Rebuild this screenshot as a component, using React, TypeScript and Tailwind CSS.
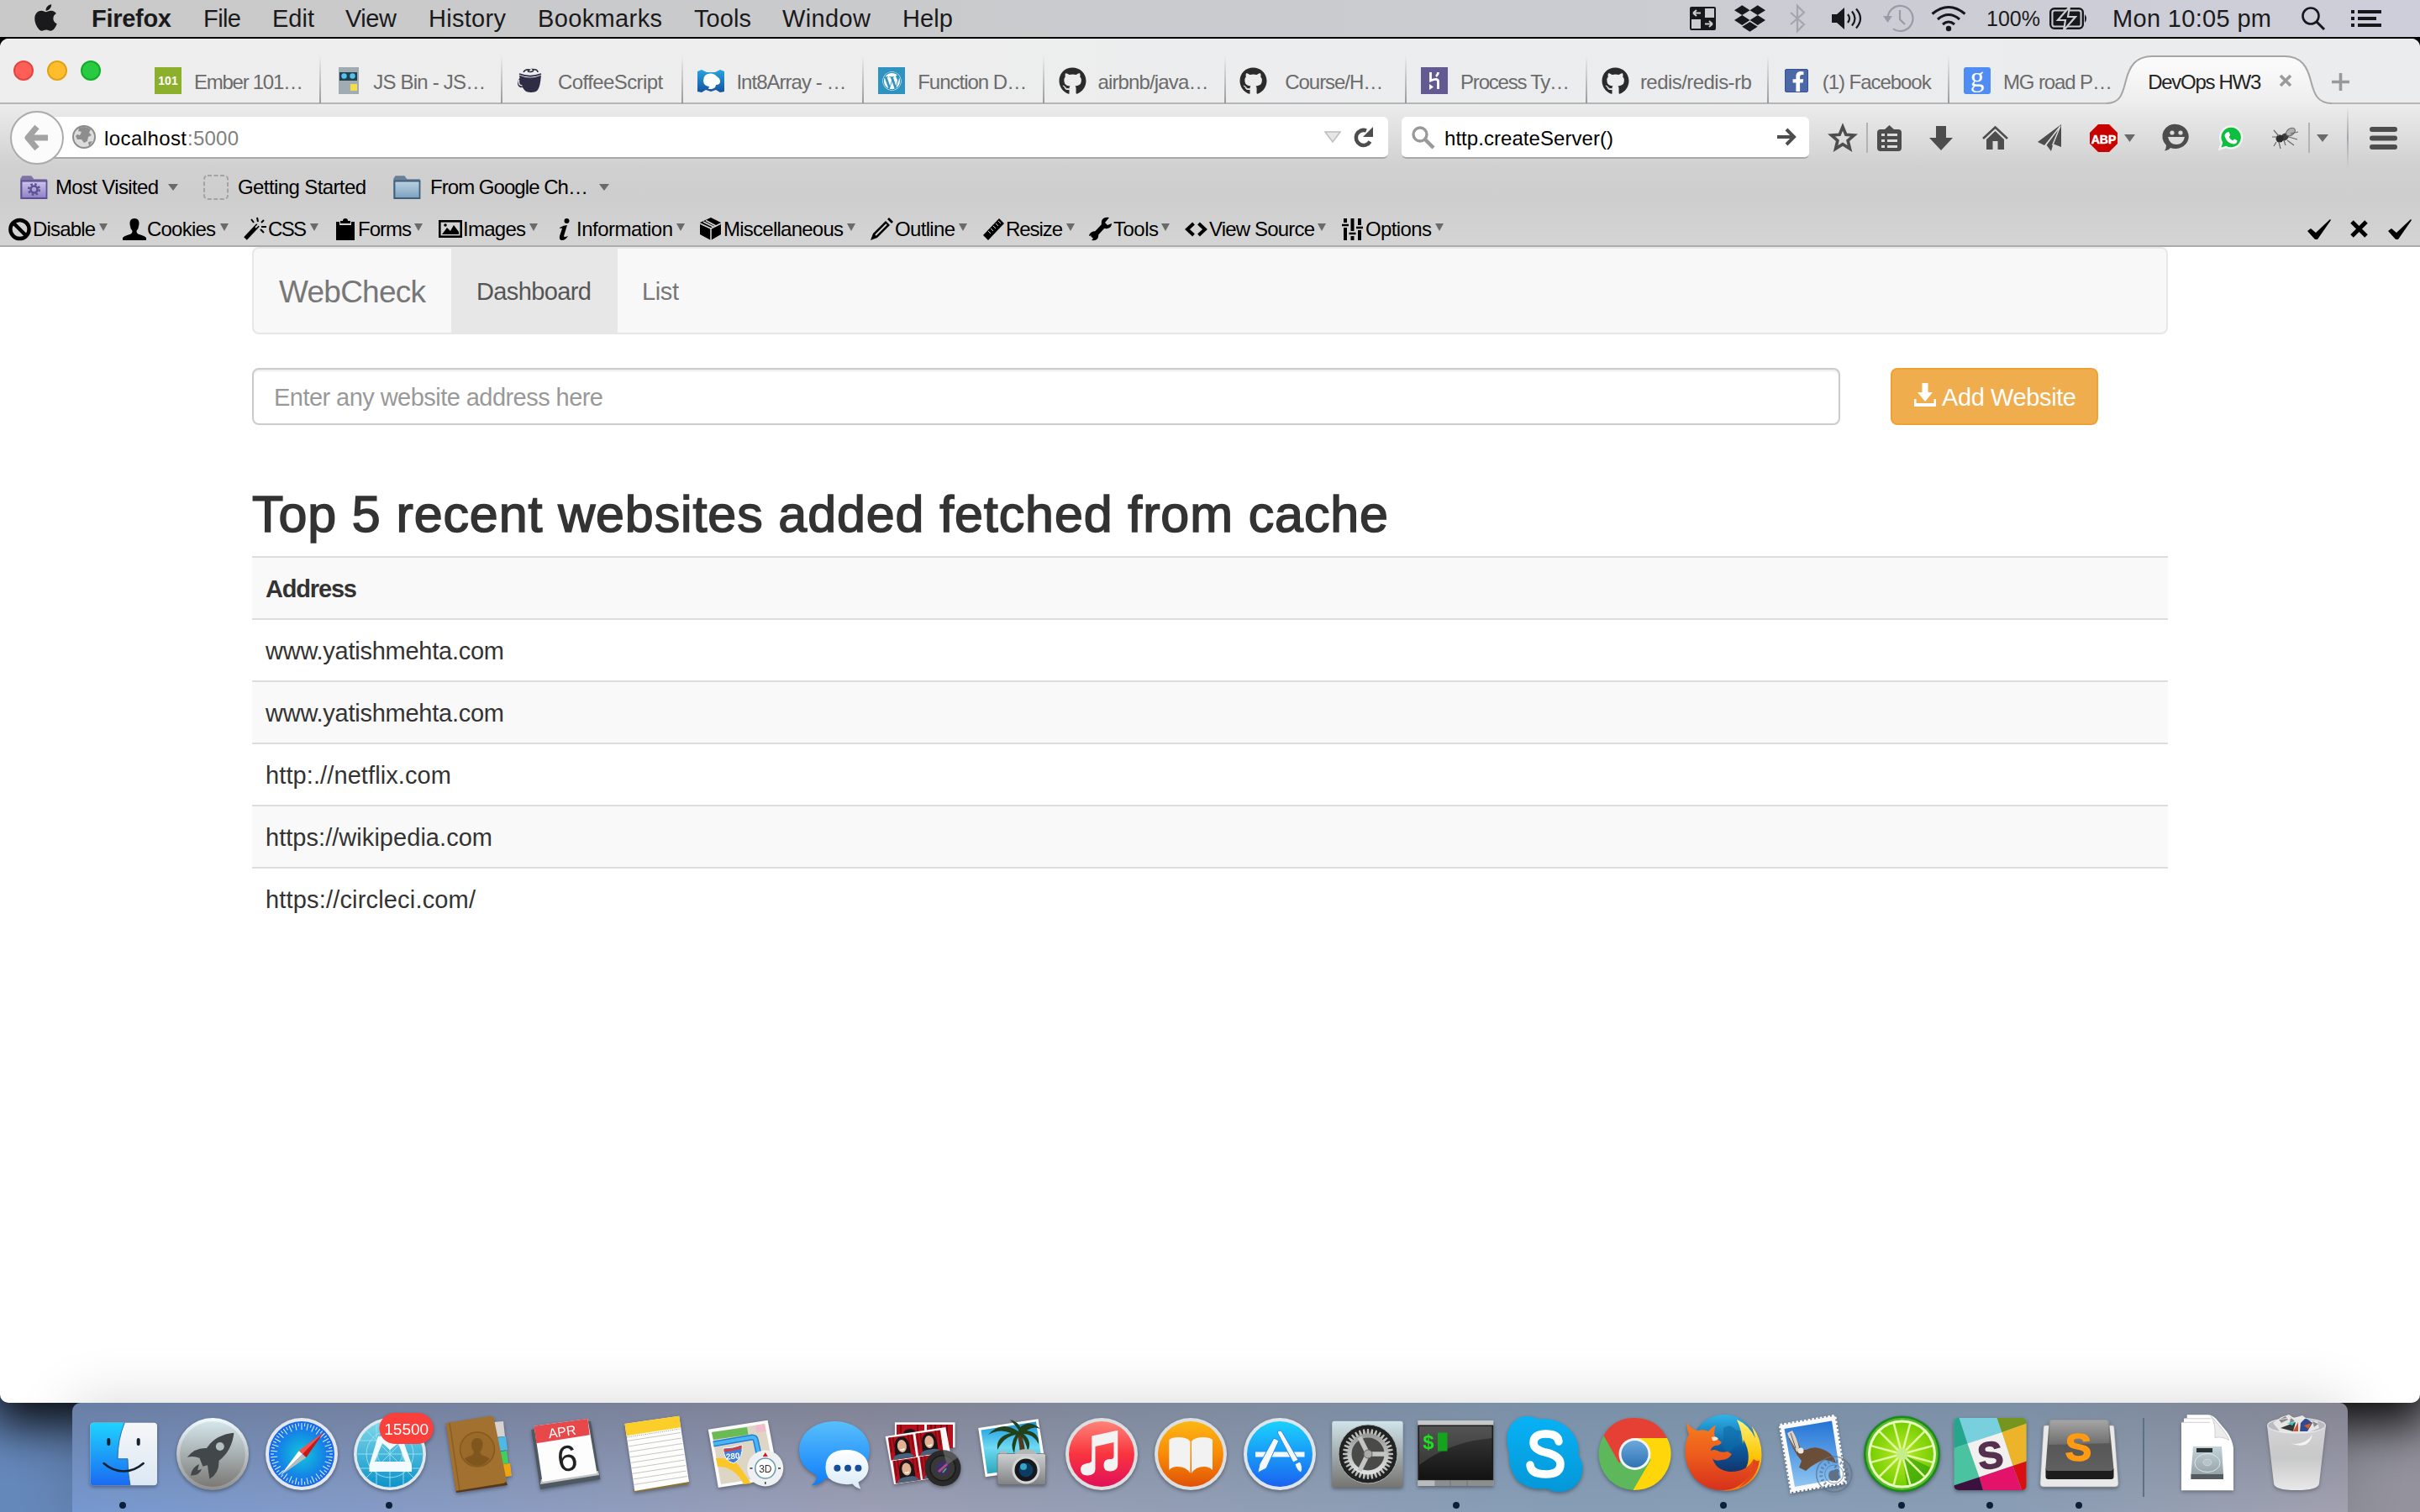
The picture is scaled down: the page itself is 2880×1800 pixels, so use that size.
import React, { useLayoutEffect, useRef, useState } from "react";
import { FaApple, FaDropbox, FaGithub, FaWordpress, FaFacebookF } from "react-icons/fa";

/* Single-line label whose letter spacing is tuned so it fills its own width. */
function Fit({ className, children }: { className: string; children: string }) {
  const outer = useRef<HTMLSpanElement>(null);
  const inner = useRef<HTMLSpanElement>(null);
  const [spacing, setSpacing] = useState(0);
  useLayoutEffect(() => {
    if (!outer.current || !inner.current) return;
    const natural = inner.current.getBoundingClientRect().width;
    setSpacing((outer.current.clientWidth - natural) / Math.max(1, children.length - 1));
  }, [children]);
  return (
    <span ref={outer} className={"block shrink-0 whitespace-nowrap " + className}>
      <span ref={inner} style={{ letterSpacing: spacing + "px" }}>{children}</span>
    </span>
  );
}

type SvgProps = { className: string; box: string; children: React.ReactNode };
const Ico = ({ className, box, children }: SvgProps) => (
  <svg className={"block shrink-0 overflow-visible " + className} viewBox={box}>{children}</svg>
);

/* ---------- menu bar ---------- */
function MenuBar() {
  return (
    <div className="relative z-20 flex h-[46px] shrink-0 items-start border-b-2 border-black bg-gradient-to-r from-[#c9c9c9] via-[#cacbce] to-[#cdced9] text-[29px] text-[#1a1a1c]">
      <div className="flex h-11 w-full items-center">
        <FaApple className="ml-[41px] h-[36px] w-[27px] -translate-y-px shrink-0" />
        <Fit className="ml-[41px] w-[95px] font-bold">Firefox</Fit>
        <Fit className="ml-[38px] w-[45px]">File</Fit>
        <Fit className="ml-[37px] w-[50px]">Edit</Fit>
        <Fit className="ml-[37px] w-[61px]">View</Fit>
        <Fit className="ml-[38px] w-[92px]">History</Fit>
        <Fit className="ml-[38px] w-[148px]">Bookmarks</Fit>
        <Fit className="ml-[38px] w-[68px]">Tools</Fit>
        <Fit className="ml-[37px] w-[105px]">Window</Fit>
        <Fit className="ml-[38px] w-[60px]">Help</Fit>
        <div className="ml-auto flex items-center">
          <Ico className="h-[28px] w-[31px]" box="0 0 31 28">
            <rect width="31" height="28" rx="2" fill="#16181c" />
            <path d="M18 2h11v11H18zM2 15h11v11H2z" fill="#ccccd1" />
            <path d="M4 7.500h9M4 7.500l4-3.500M4 7.500l4 3.500M27 20.500h-9M27 20.500l-4-3.500M27 20.500l-4 3.500" stroke="#ccccd1" strokeWidth="2" fill="none" />
          </Ico>
          <FaDropbox className="ml-[22px] h-[36px] w-[37px] text-[#16181c]" />
          <Ico className="ml-[28px] h-[32px] w-[20px]" box="0 0 20 32">
            <path d="M2 9l16 14-8 8V1l8 8L2 23" fill="none" stroke="#a5a6ad" strokeWidth="2.200" />
          </Ico>
          <Ico className="ml-[31px] h-[26px] w-[34px]" box="0 0 34 26">
            <path d="M0 8h6l9-8v26l-9-8H0z" fill="#16181c" />
            <path d="M19 8q4 5 0 10M24 4.500q7 8.500 0 17M29 1.500q10 11.500 0 23" fill="none" stroke="#16181c" strokeWidth="2.200" />
          </Ico>
          <Ico className="ml-[27px] h-[32px] w-[36px]" box="0 0 36 32">
            <path d="M5.500 16A15 15 0 1 1 12 28.300M20 6v11l6 6" fill="none" stroke="#9a9ba4" strokeWidth="2.200" />
            <path d="M0 13h11l-5.500 8z" fill="#9a9ba4" />
          </Ico>
          <Ico className="ml-[21px] h-[30px] w-[42px]" box="0 0 42 30">
            <path d="M1.500 9.500q19.500-16 39 0M8 16q13-11 26 0M14 22q7-6 14 0" fill="none" stroke="#16181c" strokeWidth="3" />
            <circle cx="21" cy="27" r="3.200" fill="#16181c" />
          </Ico>
          <Fit className="ml-[24px] w-[64px] text-[25px]">100%</Fit>
          <Ico className="ml-[11px] h-[26px] w-[45px]" box="0 0 45 26">
            <rect x="1.200" y="1.200" width="38.600" height="23.600" rx="4.500" fill="none" stroke="#16181c" strokeWidth="2.400" />
            <rect x="4.500" y="4.500" width="32" height="17" rx="1.500" fill="#16181c" />
            <path d="M42 8q4 5 0 10z" fill="#16181c" />
            <path d="M24 -1L10 15h9l-2 12 14-16h-9z" fill="#16181c" stroke="#cccdd5" strokeWidth="2.200" />
          </Ico>
          <Fit className="ml-[30px] w-[189px]">Mon 10:05 pm</Fit>
          <Ico className="ml-[36px] h-[28px] w-[28px]" box="0 0 28 28">
            <circle cx="11" cy="11" r="9.500" fill="none" stroke="#16181c" strokeWidth="2.600" />
            <path d="M18 18l9 9" stroke="#16181c" strokeWidth="3" />
          </Ico>
          <Ico className="ml-[31px] mr-[46px] h-[20px] w-[36px]" box="0 0 36 20">
            <path d="M8 2h28M8 10h22M8 18h28M0 2h4M0 10h4M0 18h4" stroke="#16181c" strokeWidth="3.800" />
          </Ico>
        </div>
      </div>
    </div>
  );
}

/* ---------- tabs ---------- */
const favEmber = (
  <div className="flex h-8 w-8 items-center justify-center bg-[#8cb02c] text-[14px] font-bold text-white">101</div>
);
const favJsBin = (
  <Ico className="h-8 w-8" box="0 0 32 32">
    <path d="M4 0h24v32H4z" fill="#a0abb2" /><path d="M5 6h21v10H5z" fill="#23424f" />
    <circle cx="10.500" cy="10.500" r="3.200" fill="#51c5f0" /><circle cx="20.500" cy="10.500" r="3.200" fill="#51c5f0" />
    <path d="M18 20h8v8h-8z" fill="#f4dd4b" />
  </Ico>
);
const favCoffee = (
  <Ico className="h-8 w-8" box="0 0 32 32">
    <path d="M3 9q13 4 26 0-1 14-4 18-2 3-8 3t-8-3q-1-1-2-3-5 1-6-4 0-5 2.500-7z" fill="#2f2c45" />
    <path d="M3 9q13 6 26 0" stroke="#ededed" strokeWidth="1.200" fill="none" />
    <path d="M2.500 15q-1 7 4 7" stroke="#ededed" strokeWidth="1.500" fill="none" />
    <path d="M3 8q13 5 26 0" stroke="#2f2c45" strokeWidth="1.500" fill="none" />
    <path d="M8 6q2-4 7-3-4 3 2 2.500 4-1 2-3 6 0 6 3.500" stroke="#2f2c45" strokeWidth="1.600" fill="none" />
  </Ico>
);
const favInt8 = (
  <Ico className="h-8 w-8" box="0 0 32 32">
    <defs><linearGradient id="mdn" x1="0" y1="0" x2="0" y2="1"><stop offset="0" stopColor="#27a5e0" /><stop offset="1" stopColor="#14529f" /></linearGradient></defs>
    <path d="M0 5l5-2 6 3h10l6-3 5 2v24l-5 1-5-3-6 2-6-2-5 3-5-1z" fill="url(#mdn)" />
    <path d="M7 16q0-8 8-8.500 5-.500 8 3.500 4 2 4 6t-5 4q0 4-5 5h-4l1-3q-7-1-7-7z" fill="#fff" />
  </Ico>
);
const favWp = (
  <div className="flex h-8 w-8 items-center justify-center bg-[#2e93c0] text-white"><FaWordpress className="h-[23px] w-[23px]" /></div>
);
const favGit = <FaGithub className="h-[33px] w-[33px] shrink-0 text-[#2b2b2b]" />;
const favHeroku = (
  <Ico className="h-8 w-8" box="0 0 32 32">
    <path d="M0 0h32v32H0z" fill="#635a92" />
    <path d="M11.500 6v10q9-3.500 9 1v9M20.500 6q0 3-2.500 5" fill="none" stroke="#fff" strokeWidth="2.800" />
    <path d="M10 20l5 3.500-5 3.500z" fill="#fff" />
  </Ico>
);
const favFb = (
  <div className="flex h-7 w-7 items-end justify-end rounded-[2px] border border-[#38528f] bg-[#4c68a6] pr-[3px] text-white"><FaFacebookF className="h-6 w-[16px]" /></div>
);
const favG = (
  <div className="flex h-8 w-8 items-center justify-center rounded-[3px] bg-[#4f8df5] pb-2 font-['Liberation_Serif',serif] text-[33px] leading-none text-white">g</div>
);

const tabs: { icon: React.ReactNode; label: string; w: string }[] = [
  { icon: favEmber, label: "Ember 101…", w: "w-[130px]" },
  { icon: favJsBin, label: "JS Bin - JS…", w: "w-[134px]" },
  { icon: favCoffee, label: "CoffeeScript", w: "w-[125px]" },
  { icon: favInt8, label: "Int8Array - …", w: "w-[131px]" },
  { icon: favWp, label: "Function D…", w: "w-[130px]" },
  { icon: favGit, label: "airbnb/java…", w: "w-[132px]" },
  { icon: favGit, label: "Course/H…", w: "w-[117px]" },
  { icon: favHeroku, label: "Process Ty…", w: "w-[130px]" },
  { icon: favGit, label: "redis/redis-rb", w: "w-[133px]" },
  { icon: favFb, label: "(1) Facebook", w: "w-[130px]" },
  { icon: favG, label: "MG road P…", w: "w-[130px]" },
];

function TabStrip() {
  return (
    <div className="relative flex h-[78px] border-b-2 border-[#b6b6b6] bg-gradient-to-r from-[#eeeeee] to-[#ebecee]">
      <div className="flex w-[166px] shrink-0 gap-4 pl-4 pt-[26px]">
        <span className="h-6 w-6 rounded-full border-2 border-[#e2463f] bg-[#ff5f57]" />
        <span className="h-6 w-6 rounded-full border-2 border-[#e1a116] bg-[#ffbd2e]" />
        <span className="h-6 w-6 rounded-full border-2 border-[#12ac28] bg-[#28ca41]" />
      </div>
      {tabs.map((t, i) => (
        <div key={i} className="relative flex h-[78px] w-[215.3px] shrink-0 items-center pl-[18px] pt-[22px] text-[24px] text-[#6b6b6b]">
          <div className="flex w-8 shrink-0 justify-center">{t.icon}</div>
          <div className="ml-[13px] flex w-[134px] justify-center pt-[3px]"><Fit className={t.w}>{t.label}</Fit></div>
          {i < 10 && <span className="absolute -right-px top-5 h-[57px] w-[2px] bg-gradient-to-b from-transparent to-[#999]" />}
        </div>
      ))}
      <div className="relative flex h-[78px] w-[240px] shrink-0 items-center pl-[22px] pt-[22px]">
        <svg className="absolute -left-[27px] top-0 h-[80px] w-[268px] overflow-visible" viewBox="0 0 268 80">
          <defs><linearGradient id="tabfill" x1="0" y1="0" x2="0" y2="1"><stop offset="0.200" stopColor="#fafafa" /><stop offset="1" stopColor="#ececec" /></linearGradient></defs>
          <path d="M0 77C16 77 19 66 23 50S34 21 54 21H212c20 0 27 13 31 29s8 27 25 27v3H0z" fill="url(#tabfill)" />
          <path d="M0 77C16 77 19 66 23 50S34 21 54 21H212c20 0 27 13 31 29s8 27 25 27" fill="none" stroke="#a5a5a5" strokeWidth="2" />
        </svg>
        <Fit className="relative mt-[3px] w-[135px] text-[24px] text-[#222]">DevOps HW3</Fit>
        <Ico className="relative ml-[22px] -mt-px h-[14px] w-[14px]" box="0 0 14 14"><path d="M1 1l12 12M13 1L1 13" stroke="#9b9b9b" strokeWidth="3.600" /></Ico>
      </div>
      <Ico className="ml-px mt-[41px] h-[21px] w-[21px]" box="0 0 21 21"><path d="M10.500 0v21M0 10.500h21" stroke="#999" strokeWidth="3.600" /></Ico>
    </div>
  );
}

/* ---------- toolbars ---------- */
const Tri = ({ className }: { className: string }) => (
  <svg className={"block shrink-0 " + className} viewBox="0 0 12 8" preserveAspectRatio="none"><path d="M0 0h12L6 8z" fill="#6a6a6a" /></svg>
);

function NavRow() {
  return (
    <div className="flex h-20 items-center text-[24px] text-black">
      <div className="relative z-10 ml-3 flex h-16 w-16 shrink-0 items-center justify-center rounded-full border-2 border-[#ababab] bg-[#fbfbfb]">
        <Ico className="h-[30px] w-[28px]" box="0 0 28 30"><path d="M14 2L3 15l11 13M4 15h23" fill="none" stroke="#a3a3a3" strokeWidth="7" strokeLinejoin="round" /></Ico>
      </div>
      <div className="-ml-[16px] flex h-[50px] w-[1592px] shrink-0 items-center rounded-r-md border-b-2 border-[#a8a8a8] bg-white pl-[26px]">
        <Ico className="h-[28px] w-[28px]" box="0 0 28 28">
          <circle cx="14" cy="14" r="13" fill="#dcdcdc" stroke="#8d8d8d" strokeWidth="2" />
          <path d="M8 3q8-3 14 2l-2 4 3 3-4 2-1 5-4 2-3-4-5 0-2-4 2-2 3 1 2-4-4-1zM19 20l5-1-4 6z" fill="#8d8d8d" />
        </Ico>
        <div className="ml-[10px] flex pt-[4px]"><Fit className="w-[98px]">localhost</Fit><Fit className="ml-px w-[61px] text-[#808080]">:5000</Fit></div>
        <svg className="ml-auto h-[14px] w-[20px]" viewBox="0 0 20 14"><path d="M1 1h18l-9 12z" fill="#e6e6e6" stroke="#bdbdbd" strokeWidth="1.500" /></svg>
        <Ico className="ml-[15px] mr-[17px] h-[24px] w-[24px]" box="0 0 24 24">
          <path d="M19.500 17.500A9 9 0 1 1 15 4.500" fill="none" stroke="#4d4d4d" strokeWidth="4.500" />
          <path d="M23 0v12H11z" fill="#4d4d4d" />
        </Ico>
      </div>
      <div className="ml-[16px] flex h-[50px] w-[485px] shrink-0 items-center rounded-md border-b-2 border-[#a8a8a8] bg-white pl-[12px]">
        <Ico className="h-[27px] w-[27px]" box="0 0 27 27"><circle cx="10" cy="10" r="8" fill="none" stroke="#999" strokeWidth="3.400" /><path d="M16 16l10 10" stroke="#999" strokeWidth="4.500" /></Ico>
        <Fit className="ml-[12px] mt-[4px] w-[201px]">http.createServer()</Fit>
        <Ico className="ml-auto mr-[16px] h-[22px] w-[22px]" box="0 0 22 22"><path d="M0 11h19M11 2l9 9-9 9" fill="none" stroke="#4d4d4d" strokeWidth="4" /></Ico>
      </div>
      <Ico className="ml-[24px] h-[32px] w-[32px]" box="0 0 32 32">
        <path d="M16 3l3.800 9.200 9.700.700-7.400 6.400 2.400 9.700L16 23.700 7.500 29l2.400-9.700-7.400-6.400 9.700-.700z" fill="none" stroke="#4d4d4d" strokeWidth="3.600" />
      </Ico>
      <span className="ml-[12px] h-9 w-[2px] bg-[#b3b3b3]" />
      <Ico className="ml-[11px] h-[31px] w-[29px]" box="0 0 29 31">
        <path d="M9 5l5.500-5L20 5h5q4 0 4 4v18q0 4-4 4H4q-4 0-4-4V9q0-4 4-4z" fill="#4d4d4d" />
        <path d="M5 11.500h4M12 11.500h12M5 18.500h4M12 18.500h12M5 25.500h4M12 25.500h12" stroke="#dcdcdc" strokeWidth="3" />
      </Ico>
      <Ico className="ml-[33px] h-[29px] w-[28px]" box="0 0 28 29"><path d="M8 0h12v14h8L14 29 0 14h8z" fill="#4d4d4d" /></Ico>
      <Ico className="ml-[35px] h-[28px] w-[31px]" box="0 0 31 28">
        <path d="M1 15L15.500 1.500 30 15" fill="none" stroke="#4d4d4d" strokeWidth="2.600" />
        <path d="M15.500 6L26 16v12h-7.500V18h-6v10H5V16z" fill="#4d4d4d" />
      </Ico>
      <Ico className="ml-[35px] h-[32px] w-[28px]" box="0 0 28 32">
        <path d="M28 0L0 21l8 4zM28 0v27l-9-3.500z" fill="#4d4d4d" /><path d="M28 0L10 24l6 8 2-7z" fill="#4d4d4d" /><path d="M27 2L9.500 25M27 2L17.500 25" stroke="#dcdcdc" strokeWidth="1.300" />
      </Ico>
      <Ico className="ml-[34px] h-[33px] w-[33px]" box="0 0 33 33">
        <path d="M10 0h13l10 10v13L23 33H10L0 23V10z" fill="#c90000" />
        <text x="16.500" y="22.500" textAnchor="middle" className="font-['Liberation_Sans',sans-serif] text-[14px] font-bold" fill="#fff" stroke="#fff" strokeWidth="0.500">ABP</text>
      </Ico>
      <Tri className="ml-[8px] h-[9px] w-[13px]" />
      <Ico className="ml-[33px] h-[32px] w-[32px]" box="0 0 32 32">
        <path d="M16 0a16 14.500 0 1 1-7 28q-2 2.500-7 3.500 2-2.500 2-6.500A14.500 14.500 0 0 1 16 0z" fill="#4d4d4d" />
        <circle cx="11" cy="10" r="2.600" fill="#ddd" /><circle cx="21" cy="10" r="2.600" fill="#ddd" />
        <path d="M6 15h20q-2 9-10 9T6 15z" fill="#ddd" />
      </Ico>
      <Ico className="ml-[34px] h-[30px] w-[30px]" box="0 0 30 30">
        <path d="M15.500 1.500a13 13 0 1 1-6.500 24.500L1.500 28.500l2.500-7.500A13 13 0 0 1 15.500 1.500z" fill="#0ebf3f" stroke="#f2f2f2" strokeWidth="2.400" />
        <path d="M10.500 8.500q2-1 2.500.500l1.200 3-1.600 2q1.500 3 4.700 4.200l1.800-1.800 3.400 1.800q0 4-4.500 4.300-8-1-10.500-9.500 0-3 3-4.500z" fill="#fff" />
      </Ico>
      <Ico className="ml-[34px] h-[26px] w-[32px]" box="0 0 32 26">
        <ellipse cx="15" cy="12" rx="5.500" ry="4" transform="rotate(-35 15 12)" fill="#3c3c3c" />
        <circle cx="9" cy="14" r="4.500" fill="#2b2b2b" />
        <ellipse cx="22" cy="6" rx="6" ry="4" transform="rotate(-35 22 6)" fill="#b0b0b0" stroke="#666" />
        <path d="M0 12h6M2 4l6 7M8 18l2 8M14 16l2 6M20 12l10 3M22 8l9-2M18 16l8 6M5 18l-3 5" stroke="#6a6a6a" strokeWidth="1.200" />
      </Ico>
      <span className="ml-[11px] h-9 w-[2px] bg-[#b3b3b3]" />
      <Tri className="ml-[8px] h-[9px] w-[14px]" />
      <span className="ml-[22px] h-[74px] w-[2px] bg-gradient-to-b from-transparent via-[#a3a7ad] to-transparent" />
      <Ico className="ml-[25px] h-[27px] w-[33px]" box="0 0 33 27"><path d="M3 3h27M3 13.500h27M3 24h27" stroke="#4d4d4d" strokeWidth="6" strokeLinecap="round" /></Ico>
    </div>
  );
}

const Folder = ({ className, id, a, b, edge, gear }: { className: string; id: string; a: string; b: string; edge: string; gear?: boolean }) => (
  <Ico className={className} box="0 0 33 29">
    <defs><linearGradient id={id} x1="0" y1="0" x2="0" y2="1"><stop offset="0" stopColor={a} /><stop offset="1" stopColor={b} /></linearGradient></defs>
    <path d="M1 27V4l2-3h10l3 4h15v22z" fill={edge} opacity="0.700" stroke={edge} strokeWidth="1.500" />
    <path d="M1.500 6.500h30V27h-30z" fill={"url(#" + id + ")"} stroke={edge} strokeWidth="1.800" />
    {gear && (<g stroke="#5d5093" fill="none"><circle cx="16.500" cy="16.500" r="4" strokeWidth="2.500" /><circle cx="16.500" cy="16.500" r="6.300" strokeWidth="2.500" strokeDasharray="2.500 2.450" /></g>)}
  </Ico>
);

function BookmarkRow() {
  return (
    <div className="flex h-[38px] items-center text-[24px] text-black">
      <Folder className="ml-[24px] h-[29px] w-[33px]" id="fol1" a="#cfc6ea" b="#8d7fc6" edge="#5d4f94" gear />
      <Fit className="ml-[9px] w-[123px]">Most Visited</Fit>
      <Tri className="ml-[11px] h-[8px] w-[12px]" />
      <Ico className="ml-[30px] h-[30px] w-[30px]" box="0 0 30 30"><rect x="1" y="1" width="28" height="28" rx="4" fill="none" stroke="#a3a3a3" strokeWidth="2" strokeDasharray="5 2.500" /></Ico>
      <Fit className="ml-[11px] w-[153px]">Getting Started</Fit>
      <Folder className="ml-[32px] h-[29px] w-[33px]" id="fol2" a="#bcd2e2" b="#7ba1bf" edge="#3f607c" />
      <Fit className="ml-[11px] w-[188px]">From Google Ch…</Fit>
      <Tri className="ml-[13px] h-[8px] w-[12px]" />
    </div>
  );
}

const k = "#000";
const devItems: { ml: string; icon: React.ReactNode; label: string; w: string; tri: string }[] = [
  { ml: "ml-[10px]", label: "Disable", w: "ml-[2px] w-[75px]", tri: "ml-[4px]", icon: <Ico className="h-[28px] w-[27px]" box="0 0 28 28"><circle cx="14" cy="14" r="11.500" fill="none" stroke={k} strokeWidth="4.600" /><path d="M6 6l16 16" stroke={k} strokeWidth="4.600" /></Ico> },
  { ml: "ml-[18px]", label: "Cookies", w: "ml-px w-[82px]", tri: "ml-[5px]", icon: <Ico className="h-[26px] w-[28px]" box="0 0 28 26"><path d="M14 0q6 0 5.500 7-.500 5-3 8 0 3 3 4 7 2 8.500 4v3H0v-3q1.500-2 8.500-4 3-1 3-4-2.500-3-3-8Q8 0 14 0z" fill={k} /></Ico> },
  { ml: "ml-[18px]", label: "CSS", w: "ml-[2px] w-[46px]", tri: "ml-[4px]", icon: <Ico className="h-[27px] w-[27px]" box="0 0 27 27"><path d="M2 25L17 9" stroke={k} strokeWidth="5" /><path d="M14 12l4-4" stroke="#d2d2d2" strokeWidth="1.800" /><path d="M16 0l1 5M9 2l3 4M24 3l-3 3M21 11h6M20 14l4 4" stroke={k} strokeWidth="2" /></Ico> },
  { ml: "ml-[21px]", label: "Forms", w: "ml-[4px] w-[64px]", tri: "ml-[3px]", icon: <Ico className="h-[26px] w-[22px]" box="0 0 22 26"><path d="M0 4h4v4h14V4h4v22H0z" fill={k} /><path d="M5 3h3q0-3 3-3t3 3h3v3H5z" fill={k} /></Ico> },
  { ml: "ml-[19px]", label: "Images", w: "ml-px w-[75px]", tri: "ml-[4px]", icon: <Ico className="h-[21px] w-[28px]" box="0 0 28 21"><rect x="1.300" y="1.300" width="25.400" height="18.400" fill="none" stroke={k} strokeWidth="2.600" /><path d="M4 17l6-8 4 4 4-7 6 8v3z" fill={k} /><circle cx="8" cy="6" r="1.800" fill={k} /></Ico> },
  { ml: "ml-[25px]", label: "Information", w: "ml-[7px] w-[115px]", tri: "ml-[4px]", icon: <Ico className="h-[26px] w-[14px]" box="0 0 14 26"><circle cx="9.500" cy="3" r="3" fill={k} /><path d="M1 11q5-3 9-3L6 21q0 2 5 0-3 5-7 5t-3-5l3-9q-1-1-3 0z" fill={k} /></Ico> },
  { ml: "ml-[18px]", label: "Miscellaneous", w: "ml-[2px] w-[143px]", tri: "ml-[4px]", icon: <Ico className="h-[27px] w-[26px]" box="0 0 26 27"><path d="M13 0l12 6v14l-12 7-13-7V6z" fill={k} /><path d="M0 7l13 6 12-6M13 13v14M7 3.500l12 6.500M4 5l12 6" stroke="#d2d2d2" strokeWidth="1.600" fill="none" /></Ico> },
  { ml: "ml-[18px]", label: "Outline", w: "ml-[2px] w-[72px]", tri: "ml-[4px]", icon: <Ico className="h-[27px] w-[27px]" box="0 0 27 27"><path d="M0 27l3-8L18 4l5 5L8 24z" fill={k} /><path d="M6 21L19 8" stroke="#d2d2d2" strokeWidth="1.800" /><path d="M20 2l2-2 5 5-2 2z" fill={k} /></Ico> },
  { ml: "ml-[19px]", label: "Resize", w: "ml-[2px] w-[68px]", tri: "ml-[4px]", icon: <Ico className="h-[26px] w-[25px]" box="0 0 25 26"><path d="M0 20L19 0l6 6L6 26z" fill={k} /><path d="M6 15l3 3M9 12l3 3M12 9l3 3M15 6l3 3M18 3l3 3" stroke="#d2d2d2" strokeWidth="1" /></Ico> },
  { ml: "ml-[17px]", label: "Tools", w: "ml-[2px] w-[54px]", tri: "ml-[3px]", icon: <Ico className="h-[27px] w-[27px]" box="0 0 27 27"><path d="M4 24L18 9" stroke={k} strokeWidth="5.500" /><path d="M24 0q-7-1-9 4-1 4 1 7t6 2q5-1 5-6l-5 2-3-3zM3 27q7 1 8-4 1-4-2-6t-7 1q-2 2-2 4l4-1 2 3z" fill={k} /></Ico> },
  { ml: "ml-[18px]", label: "View Source", w: "ml-[2px] w-[126px]", tri: "ml-[3px]", icon: <Ico className="h-[16px] w-[27px]" box="0 0 27 16"><path d="M10.500 1L3 8l7.500 7M16.500 1L24 8l-7.500 7" fill="none" stroke={k} strokeWidth="4" /></Ico> },
  { ml: "ml-[19px]", label: "Options", w: "ml-[3px] w-[79px]", tri: "ml-[4px]", icon: <Ico className="h-[26px] w-[25px]" box="0 0 25 26"><path d="M4 0v5M4 11v15M12.500 0v15M12.500 21v5M21 0v8M21 14v12" stroke={k} strokeWidth="4" /><path d="M0 8h8M8.500 18h8M17 11h8" stroke={k} strokeWidth="2.600" /></Ico> },
];

function DevRow() {
  return (
    <div className="flex h-[50px] items-center pt-[11px] text-[24px] text-black">
      {devItems.map((d) => (
        <div key={d.label} className={"flex shrink-0 items-center " + d.ml}>
          {d.icon}
          <Fit className={d.w}>{d.label}</Fit>
          <Tri className={"-mt-1 h-[9px] w-[10px] " + d.tri} />
        </div>
      ))}
      <div className="ml-auto flex items-center pr-[10px]">
        <Ico className="h-[24px] w-[28px]" box="0 0 28 24"><path d="M0 14l4-3 6 5L27 0l1 1L12 24 9 24z" fill={k} /></Ico>
        <Ico className="ml-[23px] h-[21px] w-[21px]" box="0 0 21 21"><path d="M2 2l17 17M19 2L2 19" stroke={k} strokeWidth="5" /></Ico>
        <Ico className="ml-[24px] h-[24px] w-[28px]" box="0 0 28 24"><path d="M0 14l4-3 6 5L27 0l1 1L12 24 9 24z" fill={k} /></Ico>
      </div>
    </div>
  );
}

/* ---------- page ---------- */
const rows: { t: string; w: string }[] = [
  { t: "www.yatishmehta.com", w: "w-[284px]" },
  { t: "www.yatishmehta.com", w: "w-[284px]" },
  { t: "http:.//netflix.com", w: "w-[221px]" },
  { t: "https://wikipedia.com", w: "w-[270px]" },
  { t: "https://circleci.com/", w: "w-[250px]" },
];

function Page() {
  return (
    <div className="mx-auto w-[2280px] text-[29px] text-[#333]">
      <nav className="flex h-[104px] items-stretch overflow-hidden rounded-lg border-2 border-[#e7e7e7] bg-[#f8f8f8]">
        <div className="flex items-center pl-[30px] pt-[3px]"><Fit className="w-[175px] text-[37px] text-[#777]">WebCheck</Fit></div>
        <div className="ml-[30px] flex w-[198px] items-center bg-[#e7e7e7] pl-[30px] pt-[3px] text-[#555]"><Fit className="w-[137px]">Dashboard</Fit></div>
        <div className="flex items-center pl-[29px] pt-[3px] text-[#777]"><Fit className="w-[44px]">List</Fit></div>
      </nav>
      <div className="mt-10 flex h-[68px]">
        <div className="flex w-[1890px] items-center rounded-lg border-2 border-[#ccc] bg-white pl-6 pt-[3px] text-[#999] shadow-[inset_0_2px_2px_rgba(0,0,0,0.075)]">
          <Fit className="w-[392px]">Enter any website address here</Fit>
        </div>
        <button className="ml-[60px] flex w-[247px] items-center rounded-lg border-2 border-[#eea236] bg-[#f0ad4e] pl-[26px] text-white">
          <Ico className="-mt-1 h-[28px] w-[26px]" box="0 0 26 28"><path d="M9.500 0h7v11h5.500L13 22 4 11h5.500zM0 19h2.500v5h21v-5H26v9H0z" fill="#fff" /></Ico>
          <Fit className="ml-[7px] mt-[3px] w-[160px] text-left">Add Website</Fit>
        </button>
      </div>
      <h2 className="mt-[76px] flex h-[60px] items-center text-[61px] leading-[60px] [-webkit-text-stroke:1.6px_#333]"><Fit className="w-[1352px]">Top 5 recent websites added fetched from cache</Fit></h2>
      <div className="mt-[20px]">
        <div className="flex h-[74px] items-center border-t-2 border-[#ddd] bg-[#f9f9f9] pl-4 pt-[3px] font-bold"><Fit className="w-[109px]">Address</Fit></div>
        {rows.map((r, i) => (
          <div key={i} className={"flex h-[74px] items-center border-t-2 border-[#ddd] pl-4 pt-[3px] " + (i % 2 ? "bg-[#f9f9f9]" : "bg-white")}><Fit className={r.w}>{r.t}</Fit></div>
        ))}
      </div>
    </div>
  );
}

/* ---------- dock ---------- */
const Grad = ({ id, s, h }: { id: string; s: string[]; h?: boolean }) => (
  <linearGradient id={id} x1="0" y1="0" x2={h ? "1" : "0"} y2={h ? "0" : "1"}>
    {s.map((c, i) => <stop key={i} offset={i / (s.length - 1)} stopColor={c} />)}
  </linearGradient>
);
const spokes = (n: number) => Array.from({ length: n }, (_, i) => (360 / n) * i);
const T = "font-['Liberation_Sans',sans-serif]";

const Face = ({ x, y }: { x: number; y: number }) => (
  <g transform={`translate(${x} ${y}) rotate(-8)`}>
    <path d="M-15-13h30v27h-30z" fill="#b3101c" />
    <path d="M-13-13v18M-9-13v12M9-13v12M13-13v18" stroke="#7e0a12" strokeWidth="1.500" />
    <path d="M-9 12Q-11-11 0-12T9 12z" fill="#1c1416" />
    <ellipse cx="0" cy="-1" rx="5.500" ry="7.500" fill="#e3b193" />
    <path d="M-2.500 2.500q2.500 2 5 0" stroke="#fff" strokeWidth="1.500" fill="none" />
    <path d="M-13 14q2-7 13-6 11-1 13 6z" fill="#47617a" />
  </g>
);

const apps: { run?: boolean; art: React.ReactNode }[] = [
  { run: true, art: <>
    <defs><Grad id="fi1" s={["#1fd3ff", "#1a6af2"]} /><Grad id="fi2" s={["#f6f6f8", "#dbe8f4"]} /></defs>
    <rect x="13.500" y="23.700" width="79.500" height="74.500" rx="4" fill="url(#fi2)" />
    <path d="M17.500 23.700H54.300Q46 44 46 66.700H58Q58 84 61 98.200H17.500q-4 0-4-4V27.700q0-4 4-4z" fill="url(#fi1)" />
    <path d="M54.300 23.700Q46 44 46 66.700H58Q58 84 61 98.200" fill="none" stroke="#16558f" strokeWidth="0.800" />
    <path d="M35.300 44v5M70.700 44v5" stroke="#14202c" strokeWidth="4" strokeLinecap="round" />
    <path d="M29.500 72Q40 81.500 53 81.500T76.700 72" stroke="#14202c" strokeWidth="2.500" strokeLinecap="round" fill="none" />
  </> },
  { art: <>
    <defs><Grad id="ro1" s={["#d5e6ec", "#7b7975"]} /><Grad id="ro2" s={["#f0fbff", "#8f8f8f"]} /></defs>
    <circle cx="53" cy="61" r="43" fill="url(#ro2)" /><circle cx="53" cy="61" r="39" fill="url(#ro1)" />
    <path d="M78.400 35.700Q56 38 46 54 32 53 22.800 64.700q8-2 14.600 1l4 10 5.500-1.500 2.500 16.500Q61 84 60.500 69 76 57 78.400 35.700z" fill="#42474a" />
    <circle cx="61.800" cy="52" r="5" fill="#b3bfc2" />
    <path d="M37 73q-9 4-10 13.500 10 .500 13-7.500l-5 1.500z" fill="#42474a" />
  </> },
  { art: <>
    <defs><radialGradient id="sa1"><stop offset="0" stopColor="#10c8dc" /><stop offset="1" stopColor="#1766ea" /></radialGradient></defs>
    <circle cx="53" cy="61" r="43" fill="#e4e8ec" /><circle cx="53" cy="61" r="39" fill="url(#sa1)" />
    {spokes(60).map((a, i) => <path key={a} d={i % 2 ? "M53 24v4" : "M53 24v8"} stroke="#d5edfb" strokeWidth="1.100" transform={`rotate(${a} 53 61)`} />)}
    <path d="M79.600 34.700L49.600 57.300 54 61z" fill="#ff4e48" /><path d="M79.600 34.700L58.300 65.300 54 61z" fill="#d01414" />
    <path d="M27.600 86.700L49.600 57.300 54 61z" fill="#fff" /><path d="M27.600 86.700L58.300 65.300 54 61z" fill="#b8bcbf" />
  </> },
  { run: true, art: <>
    <defs><Grad id="mb1" s={["#7fd9ea", "#0e93c8"]} /></defs>
    <circle cx="53" cy="61" r="43" fill="#dfe9ee" /><circle cx="53" cy="61" r="39.500" fill="url(#mb1)" />
    <g stroke="#9fe2f3" strokeWidth="0.900" fill="none"><path d="M53 22v78M14 61h78M25 33l56 56M81 33L25 89M37 25v72M69 25v72M17 45h72M17 78h72" /><circle cx="53" cy="61" r="28" /><circle cx="53" cy="61" r="15" /></g>
    <path d="M39 40h28l12 34v8H28.500v-8zM44 48l-9 22h36l-8-22-10 8z" fill="#f2fbff" fillRule="evenodd" />
    <rect x="40.400" y="12" width="64.500" height="37" rx="18.500" fill="#fb3f3b" />
    <text x="72.700" y="37.500" textAnchor="middle" className={T + " text-[19px]"} fill="#fff">15500</text>
  </> },
  { art: <>
    <path d="M70 23l12-1 2 18-12 1z" fill="#d5d2cf" /><path d="M72 42l13-2 2 16-13 2z" fill="#4db9e6" /><path d="M74 59l12-2 2 15-12 2z" fill="#41d05c" /><path d="M76 74l14-2 2 15-13 2z" fill="#f0a40d" />
    <path d="M15 28l11 79 61-9-2-5z" fill="#55381a" />
    <path d="M13.600 24.300L66 15.700q4-.500 5 4l14.500 71q.500 4-3 5L25.400 105z" fill="#a2712f" />
    <path d="M18 24l12 80" stroke="#8a5d23" strokeWidth="1.500" />
    <circle cx="51" cy="55.500" r="20.500" fill="#9a6a2b" stroke="#835920" strokeWidth="1.500" />
    <path d="M51 42q7 0 6.500 8-.500 5-3 8 0 4 4 5 5 1 7 4-6 8-14.500 8T36 67q2-3 7-4 4-1 4-5-3-3-3-8 0-8 7-8z" fill="#80561f" />
  </> },
  { art: <>
    <path d="M9.300 32L80 22l11.500 69-71.500 12z" fill="#4f5961" /><path d="M20 97l70-11-1-5-68 10z" fill="#c5c5c5" />
    <path d="M12.600 27.700L76.300 19 87.500 84 22.500 94z" fill="#fdfdfd" />
    <path d="M12.600 27.700L76.300 19l2.400 19.300-63.300 10z" fill="#e9484a" />
    <text x="46" y="40" textAnchor="middle" transform="rotate(-8 46 34)" className={T + " text-[16px]"} fill="#fff">APR</text>
    <text x="52" y="81" textAnchor="middle" transform="rotate(-8 52 66)" className={T + " text-[43px]"} fill="#222">6</text>
  </> },
  { art: <>
    <path d="M24 104l2 2.500 65-10v-4z" fill="#8d7433" />
    <path d="M14.500 25L79.200 15.700 91 94 26.300 105z" fill="#fdfdfb" />
    {[0, 1, 2, 3, 4, 5, 6, 7, 8].map((i) => <path key={i} d={`M${17 + i} ${45.500 + i * 6.500}l64-10`} stroke="#c6c6c6" strokeWidth="1" />)}
    <path d="M14.500 25L79.200 15.700l2 13.600L16.500 39.300z" fill="#fbce2a" /><path d="M16.800 41l64-10" stroke="#8e8e8e" strokeWidth="1" strokeDasharray="1 1.500" />
  </> },
  { art: <>
    <path d="M7.800 31.700L78.600 20.700 91.800 90l-72 11z" fill="#fbfbfb" />
    <path d="M12 35l63-10 12 62-64 10z" fill="#ddd6c4" />
    <path d="M12 35l42-6 1.500 9L14 44z" fill="#6abb56" /><path d="M64 27l11-2 1.500 9-11 1.500z" fill="#f2bccb" />
    <path d="M14 49l46-8q4 0 4.500 4L70 70" fill="none" stroke="#1d7fd8" strokeWidth="7" /><path d="M14 49l46-8q4 0 4.500 4L70 70" fill="none" stroke="#4cb4f5" strokeWidth="4" />
    <path d="M17 66q20-2 28 10l14 20-9 1Q40 76 19 76z" fill="#fbc629" />
    <path d="M26 54q11 0 22-4 2 16-10 22-12-3-12-18z" fill="#3f80d6" stroke="#fff" strokeWidth="1" /><path d="M26.500 55q11 0 21-4.500v4q-11 3-21 4z" fill="#da3b3b" />
    <text x="37" y="67" textAnchor="middle" transform="rotate(-6 37 62)" className={T + " text-[10px] font-bold"} fill="#fff">280</text>
    <circle cx="75.800" cy="78" r="21.500" fill="#eef0f2" /><circle cx="75.800" cy="78" r="12" fill="#fff" stroke="#6e9db0" strokeWidth="1.600" />
    <path d="M75.800 59l3 5h-6z" fill="#d81616" /><path d="M75.800 94v3M57.500 78h3M91 78h3" stroke="#333" strokeWidth="1.400" />
    <text x="75.800" y="82.500" textAnchor="middle" className={T + " text-[12px]"} fill="#333">3D</text>
  </> },
  { art: <>
    <defs><Grad id="me1" s={["#58bffc", "#0f7dfb"]} /><Grad id="me2" s={["#ffffff", "#d9ebf8"]} /></defs>
    <path d="M52 22c24 0 42 15 42 34.500S76 91 52 91q-6 0-10-1-8 8-17.500 8.500Q32 93 30.500 86 10 76 10 56.500C10 37 28 22 52 22z" fill="url(#me1)" />
    <path d="M67 56c15 0 25.500 9 25.500 21 0 8-5 14-12 17.500q1 5 3 8-6-1-10-6-3 .800-6.500.800-14.500-1-22-7.800Q41.500 84 41.500 77 41.500 56 67 56z" fill="url(#me2)" />
    {[55.400, 68, 80.400].map((x) => <circle key={x} cx={x} cy="77.700" r="4" fill="#154f98" />)}
  </> },
  { art: <>
    <path d="M18.900 23.300h71.700v30H18.900z" fill="#f4f4f4" /><path d="M21 26h33v18H21zM57 26h31v28H57z" fill="#b3101c" /><path d="M62 26v24M67 26v24M74 26v24M81 26v24M26 26v10M46 26v10" stroke="#740810" strokeWidth="2" /><ellipse cx="37" cy="37" rx="8" ry="6" fill="#1c1416" />
    <path d="M7.600 40L79.300 29 90 86 18 97z" fill="#f8f8f8" />
    <Face x={27.500} y={52.500} /><Face x={60} y={47.500} /><Face x={33} y={80} /><Face x={65} y={75} />
    <circle cx="76" cy="77.700" r="21.500" fill="#2a2a2b" /><circle cx="76" cy="77.700" r="15" fill="#383839" stroke="#191919" strokeWidth="1.500" /><circle cx="76" cy="77.700" r="8" fill="#3d2f63" /><path d="M71 82l10-9" stroke="#a8508d" strokeWidth="3" /><path d="M80 78l-4 5" stroke="#5fa36c" strokeWidth="2" />
    <path d="M76 56q11 0 18 9L81 74z" fill="#777" opacity="0.600" />
  </> },
  { art: <>
    <defs><Grad id="ip1" s={["#1593e0", "#6fdaf2", "#2aa6bb"]} /><Grad id="ip2" s={["#cfd0d1", "#7f8182"]} /></defs>
    <path d="M12.200 30L83.500 19.300 93 78 20.700 88.300z" fill="#fff" /><path d="M15.500 32.500L81 22.500l8 53-66 9z" fill="url(#ip1)" />
    <path d="M62 68q0-20-4-32 3-2 5 0 5 14 6 32z" fill="#55391c" />
    <path d="M60 34Q40 20 24 38q14-8 27-2-18 4-16 20 8-16 22-18-8 12-2 22 2-16 6-22 8 6 10 20 6-12-5-21 12 0 18 12 1-14-14-16 8-6 16-2-12-12-24-2-2-6-12-9 6 6 10 12z" fill="#22401a" />
    <rect x="35" y="60.500" width="57.500" height="37" rx="2" fill="url(#ip2)" stroke="#6d6e6f" strokeWidth="0.800" /><path d="M38 60.500h8v-3h-8zM56 61q3-6 13-6t13 6z" fill="#b5b6b7" />
    <circle cx="69" cy="80" r="16.500" fill="#d6d6d6" /><circle cx="69" cy="80" r="13.500" fill="#15181c" /><circle cx="69" cy="80" r="8.500" fill="#0c3c62" /><circle cx="66" cy="76" r="4" fill="#37a3c8" />
  </> },
  { art: <>
    <defs><Grad id="it1" s={["#ff8478", "#f9343f", "#e01059"]} /></defs>
    <circle cx="53" cy="61" r="43" fill="#dcdfe2" /><circle cx="53" cy="61" r="39" fill="url(#it1)" />
    <path d="M41.400 39.500L72.300 32.700V73q0 8-8.500 8.500T55.500 74t9-7q3-.500 3-3V47l-22 5v27q0 7-8.500 7.500t-9-6.500 8-8q4-.500 5-2.500z" fill="#f3f3f3" />
  </> },
  { art: <>
    <defs><Grad id="ib1" s={["#fcb714", "#f98b06", "#e05207"]} /></defs>
    <circle cx="53" cy="61" r="43" fill="#dcdfe2" /><circle cx="53" cy="61" r="39" fill="url(#ib1)" />
    <path d="M27.300 44Q31 41 38 41q11 0 14.500 5v38Q48 76 37 76q-6 0-9.700 4zM79 44q-3.700-3-10.500-3-11 0-14.500 5v38q4.500-8 15-8 6 0 10 4z" fill="#f2f2f2" />
  </> },
  { art: <>
    <defs><Grad id="as1" s={["#1ad1fd", "#1a63f0"]} /></defs>
    <circle cx="53" cy="61" r="43" fill="#dfe5ea" /><circle cx="53" cy="61" r="39" fill="url(#as1)" />
    <path d="M24 58.500h58.500v6H24z" fill="#f4f8fa" />
    <path d="M46 42l6 3-15 33-10 5 2-10zM50 35q3-4 6 0l19 33-6 3zM71 73l6-3q4 6 1.500 13-5-2-7.500-10z" fill="#f6f9fb" stroke="#2089ee" strokeWidth="1" />
  </> },
  { art: <>
    <defs><Grad id="sp1" s={["#d0e4ea", "#767470"]} /><Grad id="sp2" s={["#9a9c9c", "#e0e0e0"]} /></defs>
    <rect x="9.200" y="21.700" width="84.500" height="79" rx="3" fill="url(#sp1)" />
    <circle cx="52" cy="61" r="35" fill="#222" stroke="#a7b4b8" strokeWidth="1" />
    {spokes(36).map((a) => <path key={a} d="M50.200 38l.800-7h2l.800 7z" fill="#bcbebe" transform={`rotate(${a} 52 61)`} />)}
    <circle cx="52" cy="61" r="22" fill="#4a4a49" stroke="url(#sp2)" strokeWidth="5" />
    <path d="M52 61L42 41M52 61h22M52 61L42 81" stroke="#c3c5c5" strokeWidth="5.500" /><circle cx="52" cy="61" r="5" fill="#aaa" stroke="#666" />
  </> },
  { run: true, art: <>
    <defs><Grad id="te1" s={["#3b3c3b", "#121212"]} /></defs>
    <rect x="6.300" y="21" width="90" height="78" fill="#c7c9c9" /><path d="M6.300 26.500h90v66h-90z" fill="#1a1a1a" />
    <path d="M8 28h86.500v63H8z" fill="url(#te1)" /><path d="M8 28h86.500v14Q45 46 8 74z" fill="#fff" opacity="0.120" />
    <path d="M6.300 92.500h90V99h-90z" fill="#8d8f8f" /><path d="M6.300 92.500h20V99h-20z" fill="#bbb" /><path d="M45 92.500V99M65 92.500V99" stroke="#666" strokeWidth="0.800" />
    <text x="19" y="55" textAnchor="middle" className="font-['Liberation_Mono',monospace] text-[24px] font-bold" fill="#1fe01f">$</text>
    <rect x="30" y="35.500" width="11.500" height="22" fill="#15a51c" />
  </> },
  { art: <>
    <defs><Grad id="sk1" s={["#07b2f5", "#0497d8"]} /></defs>
    <path d="M30 16q8 0 13 3.500 20-3 35 9.500 16 14 13.500 34 5 6 5 15 0 12-8 20t-20 8q-9 0-15-4-20 3-34-9Q8 80 9 58.500 6.500 52 6.500 42q0-11 7-18.500T30 16z" fill="url(#sk1)" />
    <path d="M68 46q-1-9-15.500-9T38 47.500q0 8 14 11.500 18 4 18 14 0 12-17.500 12T34 74" fill="none" stroke="#fff" strokeWidth="9.500" strokeLinecap="round" />
  </> },
  { art: <>
    <defs><Grad id="ch1" s={["#6ba8dd", "#2f73b4"]} /></defs>
    <circle cx="52.500" cy="61" r="43" fill="#5cb85a" />
    <path d="M52.500 42H91q9 18 .500 37-12 25-41 25l21-36z" fill="#ffd60a" /><path d="M15.500 39Q27 18 52.500 18 79 18 91 42H52.500L34 72z" fill="#e64034" />
    <circle cx="52.500" cy="61" r="19" fill="#f4f4f4" /><circle cx="52.500" cy="61" r="16" fill="url(#ch1)" />
  </> },
  { run: true, art: <>
    <defs><Grad id="ff1" s={["#2fb5ea", "#0c5c9f", "#12275c"]} /><Grad id="ff2" s={["#f57c1e", "#ec5a1c", "#d6301c"]} /><Grad id="ff3" s={["#fff27a", "#fdc70a", "#f4780e"]} /></defs>
    <circle cx="53" cy="53" r="39" fill="url(#ff1)" />
    <path d="M52 30q8-6 14 2l8 2-4 8 5 6-9 4-8 8-6-6z" fill="#0e6aa6" opacity="0.600" />
    <path d="M68 20q14 6 22 22l-4-14q14 18 11 42-4 22-24 31-16 7-34 1 34-2 42-30 3-14-5-28l-1 5q-1-16-7-29z" fill="url(#ff3)" />
    <path d="M9 24q5 8 13 9 7-2 12 1 5-6 9-7-3 8-1 14l8 6q-2 4-8 4-5 2-5 6 4-2 8 0 4 3 12 1l5 3q-4 7-12 7-8 2-11-2 4 14 20 16 20 1 29-15 2 14-7 22-11 14-28 15-22 1-36-15Q4 72 7 50q2-10 4-12-3-6-2-14z" fill="url(#ff2)" />
    <path d="M88 67q5 4 7 1-3 24-25 33 16-14 18-34z" fill="#e0481b" />
    <path d="M38 41q6-2 8 2-3 3-7 2z" fill="#fbe3c8" />
  </> },
  { art: <>
    <defs><Grad id="ma1" s={["#2373d6", "#8fc6f2"]} /></defs>
    <path d="M13.500 26.700L78.600 15.700 91 95l-64 11z" fill="#fafafa" stroke="#fafafa" strokeWidth="3.500" strokeDasharray="2.800 2" />
    <path d="M18.500 31L75 21.500 86 90 31 100z" fill="url(#ma1)" />
    <path d="M22 36l6-3q6 10 10 22l6 1q8-4 16-2 16 4 20 18-8-4-16-4-8 4-14 8l-6 5-8-4 3-8q-12-14-17-33z" fill="#6a4e38" />
    <path d="M22 36l6-3q6 10 8 20l-2 6q-8-10-12-23z" fill="#d9d2c8" /><path d="M26 36l6 18M24 42l8 14" stroke="#6a5c50" strokeWidth="1" />
    <circle cx="38" cy="57" r="3.500" fill="#efe9dd" />
    <g fill="none" stroke="#5e7189" opacity="0.700"><circle cx="77.700" cy="85" r="21" strokeWidth="1.600" /><circle cx="77.700" cy="85" r="15.500" strokeWidth="4" strokeDasharray="2 3" /><circle cx="77.700" cy="85" r="11" strokeWidth="1" /></g>
    <path d="M78 80q4-3 6 1-2 4 1 7-3 6-5 5-2-1-4 0-4 0-5-6 0-7 7-7zM78 78q0-3 3-4 0 3-3 4z" fill="#5e7189" />
  </> },
  { run: true, art: <>
    <defs><radialGradient id="li1"><stop offset="0" stopColor="#b8ea2c" /><stop offset="1" stopColor="#77cf00" /></radialGradient></defs>
    <circle cx="52.500" cy="61" r="45.500" fill="#1b8a1e" /><circle cx="52.500" cy="61" r="43" fill="#59bd2a" /><circle cx="52.500" cy="61" r="40.500" fill="#ecfbc2" /><circle cx="52.500" cy="61" r="37.500" fill="url(#li1)" />
    <path d="M52.500 61l34 16q-8 18-28 21z" fill="#279a08" opacity="0.600" />
    {spokes(12).map((a) => <path key={a} d="M52.500 61V23" stroke="#e3f9a4" strokeWidth="2.500" transform={`rotate(${a + 15} 52.500 61)`} />)}
    <circle cx="52.500" cy="61" r="7" fill="#c4ee86" />
  </> },
  { run: true, art: <>
    <defs><clipPath id="sl"><rect x="9.500" y="18" width="86" height="86" rx="5" /></clipPath></defs>
    <g clipPath="url(#sl)">
      <path d="M9 18h87v86H9z" fill="#4cc3a0" /><path d="M15 18h46l5.500 17-53.500 18z" fill="#78d0de" /><path d="M9 18h6.500L25.500 48.500 9 54z" fill="#25a58c" />
      <path d="M60.500 18H96v6.500L66.500 35z" fill="#76951f" /><path d="M66.500 35L96 24.500v45L79.500 75z" fill="#edb429" />
      <path d="M25.500 48.500L66.500 35l13 40-40 13.500z" fill="#f2f0ee" /><path d="M79.500 75L96 69.500V104h-5.800z" fill="#d90f12" /><path d="M39.500 88.500l40-13.500L90 104H44z" fill="#e3136c" /><path d="M9 98.500l30.500-10L44 104H9z" fill="#3c1140" />
    </g>
    <text x="52.500" y="78" textAnchor="middle" className={T + " text-[45px] font-bold"} fill="#55304f" stroke="#55304f" strokeWidth="1.500" transform="rotate(-8 52.500 61)">S</text>
  </> },
  { run: true, art: <>
    <defs><Grad id="su1" s={["#9a9a9a", "#575757", "#606060"]} /></defs>
    <path d="M12 27h80q2 0 2 3l5 66q0 4-4 4H10q-4 0-4-4l4-66q0-3 2-3z" fill="#e9e9e9" stroke="#aaa" strokeWidth="0.600" />
    <path d="M12.500 78h81v10q0 3-3 3h-75q-3 0-3-3z" fill="#1d1d1d" />
    <path d="M20 20h64q4 0 4.300 4l5 53q0 4-4 4H16q-4 0-3.500-4l4-53q0-4 3.500-4z" fill="url(#su1)" />
    <path d="M16 50l2-26q0-3 3-3h62q3 0 3.500 3l2 24z" fill="#fff" opacity="0.130" />
    <text x="51.500" y="68.500" textAnchor="middle" className={T + " text-[47px] font-bold"} fill="#ff9a12" stroke="#ff9a12" strokeWidth="1.500">S</text>
  </> },
];

function Dock() {
  return (
    <div className="relative z-10 mx-[86px] flex h-[130px] rounded-t-[10px] bg-gradient-to-r from-[#7698d0] via-[#9c9fb5] via-35% to-[#a2a1b0] pl-[8px] shadow-[0_0_70px_rgba(0,0,0,0.16)]">
      <div className="pointer-events-none absolute inset-0 rounded-t-[10px] bg-[linear-gradient(180deg,rgba(85,85,95,0.38),rgba(90,100,110,0.12)_70%,transparent)]" />
      <div className="pointer-events-none absolute inset-0 bg-[linear-gradient(90deg,transparent_35%,rgba(115,155,185,0.55)_65%,rgba(115,155,185,0.5)_85%,transparent)]" />
      {apps.map((a, i) => (
        <div key={i} className="relative h-[130px] w-[105.83px] shrink-0">
          <svg className="block h-[130px] w-[106px] overflow-visible drop-shadow-[0_2px_2px_rgba(0,0,0,0.35)]" viewBox="0 0 106 130">{a.art}</svg>
          {a.run && <span className="absolute bottom-[4px] left-[48px] h-[8px] w-[8px] rounded-full bg-[#0c2038]" />}
        </div>
      ))}
      <span className="relative ml-[22px] mt-[18px] h-[94px] w-[2px] shrink-0 bg-[#5d7084]" />
      <svg className="relative ml-[22px] h-[130px] w-[106px] shrink-0 drop-shadow-[0_2px_2px_rgba(0,0,0,0.3)]" viewBox="0 0 106 130">
        <defs><Grad id="hd" s={["#c2d3d9", "#8e9ba0"]} /></defs>
        <path d="M28.700 14.300H54q6 0 12 8l10 12q6 8 8 19v51H22V23.300h3v-4.500h3.700z" fill="#fff" />
        <path d="M22 23.300h34M25.500 18.800h32" stroke="#cfcfcf" strokeWidth="1" /><path d="M57 15.500q6 8 5 26 8-2 17 3-4-8-9-14T57 15.500z" fill="#ececec" stroke="#c6c6c6" strokeWidth="0.800" />
        <path d="M36 52h34l2 33v6H33.500v-6z" fill="url(#hd)" /><path d="M33.500 85H72v6H33.500z" fill="#555c60" /><path d="M40 54h19v5H40z" fill="#2e3336" />
        <ellipse cx="53" cy="71.500" rx="15" ry="11" fill="none" stroke="#dbe6ea" strokeWidth="1" /><ellipse cx="53" cy="71" rx="5" ry="3.800" fill="#b6c4c9" stroke="#dbe6ea" strokeWidth="0.600" />
      </svg>
      <svg className="relative h-[130px] w-[106px] shrink-0 drop-shadow-[0_2px_2px_rgba(0,0,0,0.3)]" viewBox="0 0 106 130">
        <defs><Grad id="tr" s={["#dcdcdd", "#cfcfcf", "#f1f1f1"]} /></defs>
        <ellipse cx="53" cy="27" rx="34.500" ry="9" fill="#b9bbc2" />
        <path d="M25 24l10-7 9-3 6 4 10-3 8 6 10 1 2 8-12 5H34z" fill="#e6e6e6" />
        <path d="M32 20l8-4 3 4-8 4zM46 17l5 5-6 2zM72 22l7 3-5 4z" fill="#8b8b8b" /><path d="M34 30l18-7-3 11z" fill="#383838" /><path d="M42 24l9-1-3 4z" fill="#35c4b8" /><path d="M58 24l6-6 8 6-6 10-9 0z" fill="#324a8f" /><path d="M62 27l9-3-4 7z" fill="#d95b23" /><path d="M49 34l6-11 0 11z" fill="#c8562d" />
        <path d="M18 27q2 8 35 8t35-8l-8 69q-1 8-27 8t-27-8z" fill="url(#tr)" opacity="0.930" />
        <path d="M44 48q18 4 28-10-4 16-20 12z" fill="#f4f4f4" />
        <ellipse cx="53" cy="27" rx="34.500" ry="9" fill="none" stroke="#f1f1f1" strokeWidth="1.200" opacity="0.800" />
      </svg>
    </div>
  );
}

export default function App() {
  return (
    <div className="flex h-[1800px] w-[2880px] flex-col overflow-hidden bg-[linear-gradient(90deg,#6588bb,#6f7f96_40%,#94939d)] font-['Liberation_Sans',Arial,sans-serif] leading-none">
      <MenuBar />
      <div className="relative h-[1624px] shrink-0 bg-[linear-gradient(180deg,#05060a_0,#05060a_40px,transparent_40px)]">
        <div className="h-[1624px] overflow-hidden rounded-[10px] bg-white shadow-[0_14px_56px_14px_rgba(0,0,0,0.9)]">
          <TabStrip />
          <div className="h-[170px] border-b-2 border-[#ababab] bg-[linear-gradient(180deg,#ececec,#d0d0d0_75px,#cecece_110px,#d4d4d4)]">
            <NavRow />
            <BookmarkRow />
            <DevRow />
          </div>
          <Page />
        </div>
      </div>
      <Dock />
    </div>
  );
}
